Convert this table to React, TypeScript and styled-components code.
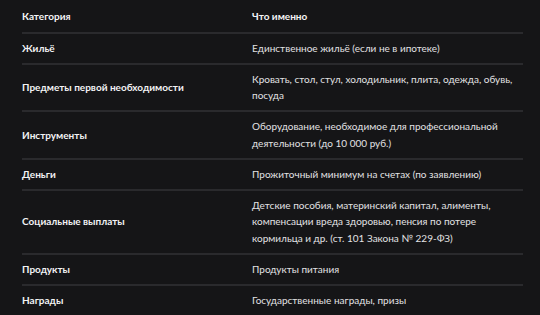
import React from "react";
import styled, { createGlobalStyle } from "styled-components";

const Global = createGlobalStyle`
  html, body { margin: 0; padding: 0; background: #151517; }
  body { font-family: Lato, Roboto, sans-serif; }
`;

const Page = styled.div`
  padding: 0 17px 0 22px;
  background: #151517;
  min-height: 315px;
  box-sizing: border-box;
`;

const Table = styled.table`
  width: 501px;
  border-collapse: collapse;
  font-size: 10px;
  line-height: 16.8px;
`;

const HeadCell = styled.th<{ $w?: string }>`
  text-align: left;
  font-weight: 700;
  color: #f4f4f6;
  padding: 8px 10px 7px 0;
  border-bottom: 2px solid #2a2a2d;
  width: ${(p) => p.$w ?? "auto"};
  &:last-child { padding-right: 0; }
`;

const Row = styled.tr`
  border-bottom: 2px solid #2a2a2d;
`;

const NameCell = styled.td`
  font-weight: 700;
  color: #f2f2f4;
  padding: 6px 10px 6px 0;
  vertical-align: middle;
`;

const ValueCell = styled.td`
  color: #e2e2e4;
  padding: 6px 0 6px 0;
  vertical-align: middle;
`;

const rows: [string, string][] = [
  ["Жильё", "Единственное жильё (если не в ипотеке)"],
  ["Предметы первой необходимости", "Кровать, стол, стул, холодильник, плита, одежда, обувь, посуда"],
  ["Инструменты", "Оборудование, необходимое для профессиональной деятельности (до 10 000 руб.)"],
  ["Деньги", "Прожиточный минимум на счетах (по заявлению)"],
  [
    "Социальные выплаты",
    "Детские пособия, материнский капитал, алименты, компенсации вреда здоровью, пенсия по потере кормильца и др. (ст. 101 Закона № 229-ФЗ)",
  ],
  ["Продукты", "Продукты питания"],
  ["Награды", "Государственные награды, призы"],
];

export default function App() {
  return (
    <>
      <Global />
      <Page>
        <Table>
          <thead>
            <tr>
              <HeadCell $w="220px">Категория</HeadCell>
              <HeadCell>Что именно</HeadCell>
            </tr>
          </thead>
          <tbody>
            {rows.map(([name, value]) => (
              <Row key={name}>
                <NameCell>{name}</NameCell>
                <ValueCell>{value}</ValueCell>
              </Row>
            ))}
          </tbody>
        </Table>
      </Page>
    </>
  );
}
